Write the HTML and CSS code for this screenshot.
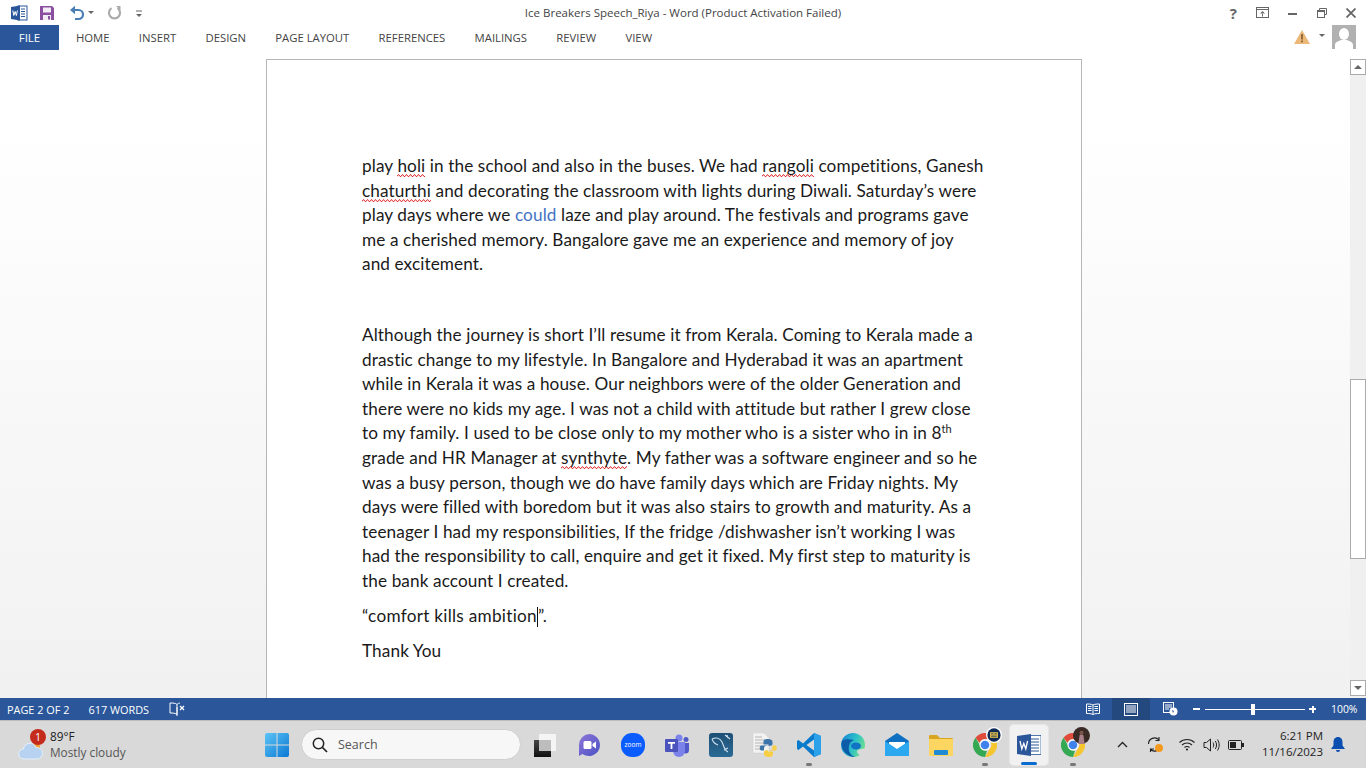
FILE: index.html
```html
<!DOCTYPE html>
<html lang="en">
<head>
<meta charset="utf-8">
<title>Ice Breakers Speech_Riya - Word</title>
<link rel="stylesheet" href="styles.css">
</head>
<body>
<div class="app">
  <header class="titlebar">
    <div class="qat">
      <svg class="qi" width="18" height="18" viewBox="0 0 18 18"><rect x="8" y="2" width="9" height="14" fill="#fff" stroke="#2b579a"/><path d="M11 5h4M11 7.500h4M11 10h4M11 12.500h4" stroke="#2b579a"/><path d="M1 3l9-1.500v15L1 15z" fill="#2b579a"/><path d="M2.800 6.500l1 5 1.300-4 1.300 4 1-5" fill="none" stroke="#fff" stroke-width="1"/></svg>
      <svg class="qi qsave" width="16" height="16" viewBox="0 0 16 16"><path d="M1 1h12l2 2v12H1z" fill="#8a4f9e"/><rect x="4" y="2.500" width="8" height="5" fill="#f3ecf5"/><rect x="4" y="10" width="8" height="5" fill="#f3ecf5"/><rect x="9" y="11" width="2" height="3.500" fill="#8a4f9e"/></svg>
      <svg class="qi qundo" width="16" height="16" viewBox="0 0 16 16"><path d="M3 5h6.500a4 4 0 0 1 0 9H6" fill="none" stroke="#4a7fb5" stroke-width="2.200"/><path d="M6 0.800L1 5l5 4.200z" fill="#4a7fb5"/></svg>
      <span class="caret qcaret"></span>
      <svg class="qi qredo" width="14" height="16" viewBox="0 0 14 16"><path d="M9.500 3.200a5.500 5.500 0 1 1-6 0" fill="none" stroke="#ababab" stroke-width="2.200"/><path d="M8 1h4.500v4.500z" fill="#ababab"/></svg>
      <svg class="qi qmore" width="8" height="8" viewBox="0 0 8 8"><path d="M1 1h6" stroke="#666"/><path d="M1 4h6L4 7z" fill="#666"/></svg>
    </div>
    <div class="doc-title">Ice Breakers Speech_Riya - Word (Product Activation Failed)</div>
    <div class="winctl">
      <span class="help">?</span>
      <svg width="13" height="11" viewBox="0 0 13 11"><rect x=".5" y=".5" width="12" height="10" fill="none" stroke="#666"/><path d="M1 2.500h11" stroke="#666"/><path d="M6.500 4L4 6.500h5zM6 6h1v3.500H6z" fill="#666"/></svg>
      <svg width="10" height="10" viewBox="0 0 10 10"><rect y="5" width="9" height="2" fill="#666"/></svg>
      <svg width="10" height="10" viewBox="0 0 10 10"><path d="M2.500 2.500V.5h7v6H7.500" fill="none" stroke="#666"/><rect x=".5" y="2.500" width="7" height="7" fill="none" stroke="#666"/><path d="M1 3.500h6" stroke="#666"/></svg>
      <svg width="10" height="10" viewBox="0 0 10 10"><path d="M.5.500l9 9M9.500.5l-9 9" stroke="#666" stroke-width="1.800"/></svg>
    </div>
  </header>
  <nav class="tabs">
    <div class="tab-file">FILE</div>
    <div class="tab-list"><span>HOME</span><span>INSERT</span><span>DESIGN</span><span>PAGE LAYOUT</span><span>REFERENCES</span><span>MAILINGS</span><span>REVIEW</span><span>VIEW</span></div>
    <div class="account">
      <svg width="16" height="14" viewBox="0 0 16 14"><path d="M8 0l8 14H0z" fill="#ecb877"/><rect x="7.200" y="4" width="1.600" height="5.500" fill="#7a5a30"/><rect x="7.200" y="10.500" width="1.600" height="1.800" fill="#7a5a30"/></svg>
      <span class="caret acct-caret"></span>
      <svg class="avatar" width="24" height="24" viewBox="0 0 24 24"><rect width="24" height="24" fill="#b1b1b1"/><ellipse cx="12" cy="9" rx="5" ry="6" fill="#fff"/><path d="M3 24v-4c0-3 4-4 6-5h6c2 1 6 2 6 5v4z" fill="#fff"/></svg>
    </div>
  </nav>
  <main class="workspace">
    <div class="doc-area">
      <article class="page">
        <p class="para para-first">
          <span class="ln">play <u class="sp">holi</u> in the school and also in the buses. We had <u class="sp">rangoli</u> competitions, Ganesh</span>
          <span class="ln"><u class="sp">chaturthi</u> and decorating the classroom with lights during Diwali. Saturday’s were</span>
          <span class="ln">play days where we <span class="blue">could</span> laze and play around. The festivals and programs gave</span>
          <span class="ln">me a cherished memory. Bangalore gave me an experience and memory of joy</span>
          <span class="ln">and excitement.</span>
        </p>
        <p class="para para-second">
          <span class="ln">Although the journey is short I’ll resume it from Kerala. Coming to Kerala made a</span>
          <span class="ln">drastic change to my lifestyle. In Bangalore and Hyderabad it was an apartment</span>
          <span class="ln">while in Kerala it was a house. Our neighbors were of the older Generation and</span>
          <span class="ln">there were no kids my age. I was not a child with attitude but rather I grew close</span>
          <span class="ln">to my family. I used to be close only to my mother who is a sister who in in 8<sup>th</sup></span>
          <span class="ln">grade and HR Manager at <u class="sp">synthyte</u>. My father was a software engineer and so he</span>
          <span class="ln">was a busy person, though we do have family days which are Friday nights. My</span>
          <span class="ln">days were filled with boredom but it was also stairs to growth and maturity. As a</span>
          <span class="ln">teenager I had my responsibilities, If the fridge /dishwasher isn’t working I was</span>
          <span class="ln">had the responsibility to call, enquire and get it fixed. My first step to maturity is</span>
          <span class="ln">the bank account I created.</span>
        </p>
        <p class="para para-quote"><span class="ln ln-wide">“comfort kills ambition<i class="cursor"></i>”.</span></p>
        <p class="para para-quote"><span class="ln">Thank You</span></p>
      </article>
    </div>
    <aside class="scrollbar">
      <div class="sb-btn"><i class="tri-up"></i></div>
      <div class="sb-track"><div class="sb-thumb"></div></div>
      <div class="sb-btn"><i class="tri-down"></i></div>
    </aside>
  </main>
  <footer class="statusbar">
    <span class="st-page">PAGE 2 OF 2</span>
    <span class="st-words">617 WORDS</span>
    <svg class="st-book" width="16" height="14" viewBox="0 0 16 14"><path d="M8 2.500C6.500 1 4 1 1 1v10c3 0 5 0 7 1.500V2.500zM8 2.500C9 1.500 10 1 11 1" fill="none" stroke="#fff"/><path d="M8 5v9" stroke="#fff"/><path d="M11 4l4 4M15 4l-4 4" stroke="#fff" stroke-width="1.300"/></svg>
    <div class="st-right">
      <svg class="st-view" width="14" height="13" viewBox="0 0 14 13"><path d="M7 2C5 1 3 1 .5 1v9.500c2.500 0 4.500 0 6.500 1 2-1 4-1 6.500-1V1C11 1 9 1 7 2zM7 2v9.500" fill="none" stroke="#fff"/><path d="M2 3.500h3.500M2 5.500h3.500M2 7.500h3.500M8.500 3.500H12M8.500 5.500H12M8.500 7.500H12" stroke="#fff"/></svg>
      <div class="st-active"><svg width="14" height="13" viewBox="0 0 14 13"><rect x=".5" y=".5" width="13" height="12" fill="none" stroke="#fff"/><path d="M2 3h10M2 5h10M2 7h10M2 9h10" stroke="#fff"/></svg></div>
      <svg class="st-view" width="15" height="14" viewBox="0 0 15 14"><rect x=".5" y=".5" width="10" height="10" fill="none" stroke="#fff"/><path d="M2 3h7M2 5h7M2 7h4" stroke="#fff"/><circle cx="10.500" cy="9.500" r="4" fill="#fff"/><path d="M9 8l2 1-1 2z" fill="#2b579a"/></svg>
      <div class="zoom"><i class="z-sign"></i><div class="z-track"><i class="z-thumb"></i></div><i class="z-sign z-plus"></i></div>
      <span class="st-pct">100%</span>
    </div>
  </footer>
  <div class="taskbar">
    <div class="weather">
      <div class="w-icon">
        <svg width="26" height="20" viewBox="0 0 26 20"><circle cx="18" cy="7" r="4" fill="#f0a030"/><path d="M6 19a5 5 0 0 1-.500-10 6.500 6.500 0 0 1 12.500-1.500 5.700 5.700 0 0 1 1.500 11.500z" fill="#b7d3f1" stroke="#e6f0fb"/></svg>
        <b class="w-badge">1</b>
      </div>
      <div class="w-text"><div class="w-temp">89°F</div><div class="w-desc">Mostly cloudy</div></div>
    </div>
    <div class="tb-center">
      <svg class="tb-win" width="24" height="24" viewBox="0 0 24 24"><defs><linearGradient id="w1" x1="0" y1="0" x2="1" y2="1"><stop offset="0" stop-color="#5cc4f5"/><stop offset="1" stop-color="#0a78d4"/></linearGradient></defs><path d="M0 2a2 2 0 0 1 2-2h9.500v11.500H0zM12.500 0H22a2 2 0 0 1 2 2v9.500H12.500zM0 12.500h11.500V24H2a2 2 0 0 1-2-2zM12.500 12.500H24V22a2 2 0 0 1-2 2h-9.500z" fill="url(#w1)"/></svg>
      <div class="search">
        <svg width="16" height="16" viewBox="0 0 16 16"><circle cx="6.500" cy="6.500" r="5.200" fill="none" stroke="#222" stroke-width="1.500"/><path d="M10.500 10.500L15 15" stroke="#222" stroke-width="1.700"/></svg>
        <span>Search</span>
      </div>
      <div class="apps">
        <div class="app-ic"><svg width="24" height="24" viewBox="0 0 24 24"><rect x="6" y="1" width="17" height="17" fill="#f5f5f5"/><rect x="1" y="7" width="17" height="17" fill="url(#tv)"/><rect x="6" y="7" width="12" height="11" fill="#bdbdbd"/><defs><linearGradient id="tv" x1="0" y1="0" x2="0" y2="1"><stop offset="0" stop-color="#444"/><stop offset="1" stop-color="#111"/></linearGradient></defs></svg></div>
        <div class="app-ic"><svg width="24" height="24" viewBox="0 0 24 24"><defs><linearGradient id="mt" x1="0" y1="0" x2="1" y2="1"><stop offset="0" stop-color="#8f76d8"/><stop offset="1" stop-color="#4a52c4"/></linearGradient></defs><path d="M12 1a11 11 0 1 1-6.500 19.900L2 23v-11A11 11 0 0 1 12 1z" fill="url(#mt)"/><rect x="6.500" y="8" width="8" height="8" rx="1.500" fill="#fff"/><path d="M15.500 11l3.500-2.500v7L15.500 13z" fill="#fff"/></svg></div>
        <div class="app-ic"><svg width="24" height="24" viewBox="0 0 24 24"><rect width="24" height="24" rx="11" fill="#0b5cff"/><text x="12" y="14" text-anchor="middle" class="zoomtxt">zoom</text></svg></div>
        <div class="app-ic"><svg width="26" height="24" viewBox="0 0 26 24"><circle cx="15" cy="5" r="3.500" fill="#7b83eb"/><circle cx="22" cy="6.500" r="2.500" fill="#5059c9"/><path d="M18 10h7v7a3.500 3.500 0 0 1-7 0z" fill="#5059c9"/><path d="M9 9h12v9a6 6 0 0 1-12 0z" fill="#7b83eb"/><rect x="1" y="6" width="13" height="13" rx="1" fill="#4b53bc"/><path d="M4 9h7v1.800H8.400V16H6.600v-5.200H4z" fill="#fff"/></svg></div>
        <div class="app-ic"><svg width="24" height="24" viewBox="0 0 24 24"><defs><linearGradient id="my" x1="0" y1="0" x2="0" y2="1"><stop offset="0" stop-color="#1f4f75"/><stop offset="1" stop-color="#2a6a94"/></linearGradient></defs><rect width="24" height="24" rx="3" fill="url(#my)"/><path d="M3 6c4-2 8-1 10 3s2 8 6 10M3 6c1 3 3 5 6 6M16 2l5 4M18 2l1 3M15 17l4-2" fill="none" stroke="#cfe0ec" stroke-width="1.100"/></svg></div>
        <div class="app-ic"><svg width="26" height="24" viewBox="0 0 26 24"><path d="M1 0h11l5 5v15H1z" fill="#f2f2f2" stroke="#ccc" stroke-width=".5"/><path d="M3 4h7M3 7h10M3 10h10M3 13h8M3 16h8" stroke="#b5b5b5"/><path d="M16 6c-3.500 0-4.500 1.200-4.500 3v2.500h5v1h-7c-2.200 0-2.500 5 0 5h2.500v-2.500c0-1.300 1-2.300 3-2.300h3.500c1.200 0 2-1 2-2V9c0-1.800-2-3-4.500-3z" fill="#3a74a8"/><path d="M16.500 24c3.500 0 4.500-1.200 4.500-3v-2.500h-5v-1h7c2.200 0 2.500-5 0-5H20.500V15c0 1.300-1 2.300-3 2.300H14c-1.200 0-2 1-2 2V21c0 1.800 2 3 4.500 3z" fill="#f7cf45"/></svg></div>
        <div class="app-ic"><svg width="24" height="24" viewBox="0 0 24 24"><path d="M17 0l7 3v18l-7 3-11-10.500L1.500 17 0 16V8l1.500-1L6 10.500z" fill="#0a7bcc"/><path d="M17 6.500v11L9.500 12z" fill="#d9d9d9"/><path d="M17 0l7 3v18l-7 3z" fill="#2ba1ea"/></svg><i class="dot"></i></div>
        <div class="app-ic"><svg width="24" height="24" viewBox="0 0 24 24"><defs><linearGradient id="ed" x1="0" y1=".2" x2="1" y2=".6"><stop offset="0" stop-color="#1a86d6"/><stop offset=".55" stop-color="#2cc1c9"/><stop offset="1" stop-color="#6fe08a"/></linearGradient></defs><circle cx="12" cy="12" r="12" fill="url(#ed)"/><path d="M1 8C-1 17 6 24 14 24c-5-2-7-6-6-11 .5-3 2-5 5-6C8 6 3 6 1 8z" fill="#0c5ca8"/><ellipse cx="15" cy="13" rx="5" ry="3.500" fill="#1173c4"/><path d="M24 15c-3 1.500-7 1-8 3 0 2.500 2 4 4 4 2-1.500 3.500-4 4-7z" fill="#d9d9d9"/></svg></div>
        <div class="app-ic"><svg width="24" height="24" viewBox="0 0 24 24"><path d="M12 0l12 8v15H0V8z" fill="#0f6fc0"/><path d="M4 9h16v7l-8 4-8-4z" fill="#fff"/><path d="M0 8l12 8 12-8v15H0z" fill="#2ba8ef"/></svg></div>
        <div class="app-ic"><svg width="24" height="22" viewBox="0 0 24 22"><path d="M0 2a1 1 0 0 1 1-1h7l3 3h12a1 1 0 0 1 1 1v3H0z" fill="#d9a520"/><path d="M0 5h24v16a1 1 0 0 1-1 1H1a1 1 0 0 1-1-1z" fill="#fcd660"/><rect x="5" y="16" width="14" height="5" rx="1" fill="#1f8bd4"/></svg></div>
        <div class="app-ic"><svg class="chrome" width="24" height="24" viewBox="0 0 24 24"><use href="#chr"/></svg><svg class="ovl ovl-badge" width="16" height="16" viewBox="0 0 14 14"><circle cx="7" cy="7" r="7" fill="#fff"/><circle cx="7" cy="7" r="5.800" fill="#0f2a55"/><rect x="3.500" y="4.500" width="7" height="5" fill="#d9b94e"/><path d="M4.500 6h2M7.500 6h2M4.500 8h5" stroke="#0f2a55" stroke-width=".7"/></svg><i class="dot"></i></div>
        <div class="app-ic app-active"><svg width="24" height="22" viewBox="0 0 24 22"><rect x="11" y="1.500" width="13" height="19" fill="#fff" stroke="#2b579a" stroke-width=".8"/><path d="M14 5h8M14 8h8M14 11h8M14 14h8M14 17h8" stroke="#2b579a"/><path d="M0 2l14-2v22L0 20z" fill="#2b579a"/><path d="M3 7l1.800 8 2-5.500 2 5.500 1.800-8" fill="none" stroke="#fff" stroke-width="1.300"/></svg><i class="dot dot-blue"></i></div>
        <div class="app-ic"><svg class="chrome" width="24" height="24" viewBox="0 0 24 24"><defs><g id="chr"><path d="M12 0a12 12 0 0 1 10.400 6H12a6 6 0 0 0-5.600 3.800L2.500 4.700A12 12 0 0 1 12 0z" fill="#e04a3a"/><path d="M22.400 6A12 12 0 0 1 12 24l5-8.500A6 6 0 0 0 17 8z" fill="#f6c62f"/><path d="M12 24A12 12 0 0 1 2.500 4.700L7 12.500A6 6 0 0 0 14 17.700z" fill="#34a853"/><circle cx="12" cy="12" r="5.500" fill="#fff"/><circle cx="12" cy="12" r="4.300" fill="#3f82ee"/></g></defs><use href="#chr"/></svg><svg class="ovl ovl-photo" width="17" height="17" viewBox="0 0 16 16"><circle cx="8" cy="8" r="8" fill="#3a2a26"/><path d="M5 16l1-7c0-3 4-3 4 0l1 7z" fill="#a98088"/><circle cx="8" cy="5.500" r="2" fill="#7a5548"/></svg><i class="dot"></i></div>
      </div>
    </div>
    <div class="tray">
      <svg class="t-caret" width="11" height="7" viewBox="0 0 11 7"><path d="M1 6l4.500-4.500L10 6" fill="none" stroke="#222" stroke-width="1.300"/></svg>
      <div class="t-sync"><svg width="16" height="17" viewBox="0 0 16 17"><path d="M1.500 8a6 6 0 0 1 10.500-4M12 1v3.500H8.500M13.500 9.500a6 6 0 0 1-10 4M3.500 16v-3h3.500" fill="none" stroke="#222" stroke-width="1.100"/><circle cx="12" cy="12" r="4" fill="#f39a1e"/></svg></div>
      <svg class="t-wifi" width="16" height="13" viewBox="0 0 16 13"><path d="M.5 4.500c4-4 11-4 15 0M3 7c2.700-2.700 7.300-2.700 10 0M5.500 9.500c1.300-1.300 3.700-1.300 5 0" fill="none" stroke="#222" stroke-width="1.100"/><circle cx="8" cy="11.500" r="1.100" fill="#222"/></svg>
      <svg class="t-vol" width="17" height="14" viewBox="0 0 17 14"><path d="M1 4.500h2.500L7.500 1v12L3.500 9.500H1z" fill="none" stroke="#222"/><path d="M10 4.500c1 1.500 1 3.500 0 5M12.300 3c1.700 2.500 1.700 5.500 0 8M14.500 1.500c2.200 3.500 2.200 7.500 0 11" fill="none" stroke="#222"/></svg>
      <svg class="t-batt" width="16" height="10" viewBox="0 0 16 10"><rect x=".5" y=".5" width="13" height="9" rx="1" fill="none" stroke="#222"/><rect x="2" y="2" width="6" height="6" fill="#222"/><rect x="14" y="3" width="2" height="4" fill="#222"/></svg>
      <div class="clock"><div>6:21 PM</div><div>11/16/2023</div></div>
      <svg class="t-bell" width="14" height="15" viewBox="0 0 14 15"><path d="M7 0c3 0 4.500 2.500 4.500 5v3.500L14 12H0l2.500-3.500V5C2.500 2.500 4 0 7 0z" fill="#0a4fb0"/><path d="M5 13h4a2 2 0 0 1-4 0z" fill="#0a4fb0"/></svg>
    </div>
  </div>
</div>
</body>
</html>
```
FILE: styles.css
```css
html, body { margin: 0; padding: 0; height: 100%; overflow: hidden; }
.app { width: 1366px; height: 768px; display: flex; flex-direction: column; background: #fff; overflow: hidden; font-family: "Open Sans", "Noto Sans", sans-serif; color: #444; }

.titlebar { height: 25px; flex: none; display: grid; grid-template-columns: 1fr auto 1fr; align-items: center; }
.qat { display: flex; align-items: center; padding-left: 10px; }
.qi { flex: none; display: block; }
.qsave { margin-left: 11px; }
.qundo { margin-left: 14px; }
.caret { display: block; width: 0; height: 0; border-left: 3px solid transparent; border-right: 3px solid transparent; border-top: 3px solid #666; }
.qcaret { margin-left: 3px; }
.qredo { margin-left: 14px; }
.qmore { margin-left: 13px; margin-top: 2px; }
.doc-title { font-size: 11.500px; color: #444; text-align: center; white-space: nowrap; }
.winctl { display: flex; align-items: center; justify-content: flex-end; padding-right: 10px; }
.winctl svg { margin-left: 19px; flex: none; }
.help { font-size: 15px; font-weight: 700; color: #666; line-height: 20px; }

.tabs { height: 25px; flex: none; display: flex; align-items: stretch; }
.tab-file { width: 59px; background: #2b579a; color: #fff; font-size: 11.500px; display: flex; align-items: center; justify-content: center; }
.tab-list { display: flex; align-items: center; gap: 29.300px; padding-left: 17px; font-size: 11.300px; color: #444; white-space: nowrap; }
.account { margin-left: auto; display: flex; align-items: flex-start; padding-right: 10px; }
.account > svg:first-child { margin-top: 5px; }
.acct-caret { margin-left: 9px; margin-top: 9px; }
.avatar { margin-left: 7px; }

.workspace { height: 648px; flex: none; display: flex; background: #fff; }
.doc-area { flex: 1; min-width: 0; display: flex; justify-content: center; padding: 9px 2px 0 0; overflow: hidden; background: linear-gradient(#fff 10%, #f1f1f1); }
.page { width: 816px; height: 700px; box-sizing: border-box; flex: none; background: #fff; border: 1px solid #b6b6b6; padding: 94px 0 0 95px; font-family: Lato, "Open Sans", sans-serif; font-size: 17.200px; letter-spacing: .1px; color: #1a1a1a; white-space: nowrap; }
.para { margin: 0; }
.para-second { margin-top: 46px; }
.para-quote { margin-top: 10.500px; }
.ln { display: block; height: 24.600px; line-height: 24.600px; }
.ln-wide { letter-spacing: .27px; }
.sp { text-decoration: none; padding-bottom: 1px; background: url("data:image/svg+xml,%3Csvg xmlns='http://www.w3.org/2000/svg' width='4' height='3'%3E%3Cpath d='M0 2.500L1 .8 2 .8 3 2.500 4 2.500' fill='none' stroke='%23dd2222' stroke-width='.9'/%3E%3C/svg%3E") repeat-x 0 100%; }
.blue { color: #4472c4; }
sup { font-size: 11px; line-height: 0; vertical-align: 6px; }
.cursor { display: inline-block; width: 1px; height: 20px; background: #111; vertical-align: -5px; }

.scrollbar { width: 16px; flex: none; display: flex; flex-direction: column; background: linear-gradient(#fff 9px, #f0f0f0 9px); padding-top: 9px; padding-bottom: 2px; box-sizing: border-box; }
.sb-btn { height: 16px; flex: none; box-sizing: border-box; border: 1px solid #ababab; background: #fff; display: flex; align-items: center; justify-content: center; }
.sb-track { flex: 1; padding-top: 304px; }
.sb-thumb { height: 180px; box-sizing: border-box; background: #fff; border: 1px solid #ababab; }
.tri-up { width: 0; height: 0; border-left: 4px solid transparent; border-right: 4px solid transparent; border-bottom: 4px solid #666; }
.tri-down { width: 0; height: 0; border-left: 4px solid transparent; border-right: 4px solid transparent; border-top: 4px solid #666; }

.statusbar { height: 22px; flex: none; background: #2b579a; color: #fff; font-size: 10.900px; display: flex; align-items: center; white-space: nowrap; }
.st-page { margin-left: 7px; }
.st-words { margin-left: 19px; }
.st-book { margin-left: 20px; }
.st-right { margin-left: auto; height: 100%; display: flex; align-items: center; }
.st-active { width: 38px; height: 100%; margin: 0 13px 0 0; background: #24497f; display: flex; align-items: center; justify-content: center; }
.st-view { margin-right: 12px; }
.st-view:last-of-type { margin-right: 0; }
.zoom { display: flex; align-items: center; margin-left: 15px; }
.z-sign { display: block; width: 7px; height: 2px; background: #fff; position: relative; }
.z-plus::after { content: ""; position: absolute; left: 2.500px; top: -2.500px; width: 2px; height: 7px; background: #fff; }
.z-track { width: 100px; height: 1px; margin: 0 4px 0 5px; background: #fff; position: relative; }
.z-thumb { position: absolute; left: 46px; top: -5px; width: 4px; height: 11px; background: #fff; }
.st-pct { width: 27px; margin: 0 8px 0 15px; font-size: 10.400px; }

.taskbar { height: 48px; flex: none; display: flex; align-items: center; background: #d9d9d9; border-top: 1px solid #bdbdbd; box-sizing: border-box; position: relative; font-family: "Open Sans", "Noto Sans", sans-serif; color: #222; }
.weather { display: flex; align-items: center; padding-left: 18px; width: 265px; flex: none; box-sizing: border-box; }
.w-icon { width: 26px; height: 30px; position: relative; display: flex; align-items: flex-end; }
.w-badge { position: absolute; left: 12px; top: -1px; width: 16px; height: 16px; border-radius: 50%; background: #c42b1c; color: #fff; font-size: 10.500px; line-height: 16px; text-align: center; font-weight: 400; }
.w-text { margin-left: 6px; font-size: 11.800px; line-height: 16px; padding-bottom: 2px; }
.w-temp { color: #222; }
.w-desc { color: #555; }
.tb-center { display: flex; align-items: center; flex: none; }
.tb-win { flex: none; }
.search { width: 220px; height: 31px; margin-left: 12px; box-sizing: border-box; background: #f7f7f7; border: 1px solid #cfcfcf; border-radius: 16px; display: flex; align-items: center; padding-left: 10px; gap: 10px; font-size: 12.500px; color: #555; }
.apps { display: flex; align-items: center; margin-left: 2px; }
.app-ic { width: 44px; height: 40px; flex: none; position: relative; display: flex; align-items: center; justify-content: center; border-radius: 4px; box-sizing: border-box; }
.app-active { width: 38px; margin: 0 3px; background: #f1f1f1; box-shadow: 0 0 0 1px #e6e6e6; }
.zoomtxt { font-family: "Open Sans", sans-serif; font-size: 6.500px; fill: #fff; }
.dot { position: absolute; left: 50%; margin-left: -3px; bottom: -1px; width: 6px; height: 3px; border-radius: 2px; background: #777; }
.dot-blue { width: 16px; margin-left: -8px; background: #0a6cce; bottom: 0; }
.ovl { position: absolute; }
.ovl-badge { left: 23px; top: 2px; }
.ovl-photo { left: 22px; top: 2px; }
.tray { margin-left: auto; display: flex; align-items: center; height: 100%; }
.t-sync { margin-left: 19px; display: flex; }
.t-wifi { margin-left: 16px; }
.t-vol { margin-left: 8px; }
.t-batt { margin-left: 8px; }
.clock { margin-left: 15px; width: 64px; font-size: 11.500px; line-height: 16px; padding-bottom: 2px; text-align: right; white-space: nowrap; color: #222; }
.t-bell { margin-left: 8px; margin-right: 21px; }
```
